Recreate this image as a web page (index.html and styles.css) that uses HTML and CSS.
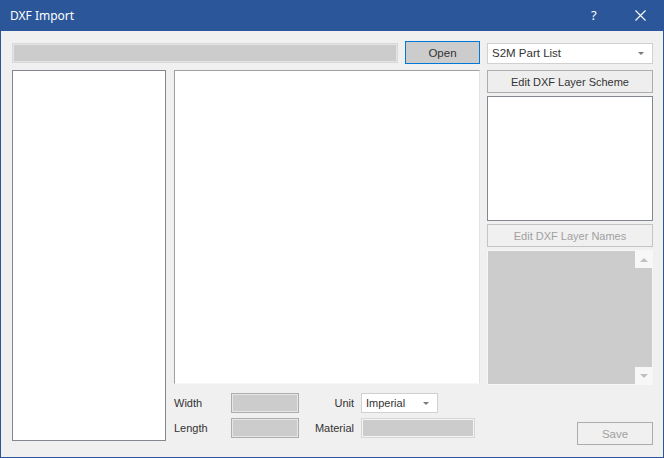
FILE: index.html
```html
<!DOCTYPE html>
<html>
<head>
<meta charset="utf-8">
<link rel="stylesheet" href="styles.css">
</head>
<body>
<div class="window">
  <div class="titlebar">
    <span class="title">DXF Import</span>
    <span class="help">?</span>
    <span class="close"><svg width="11" height="11" viewBox="0 0 11 11"><path d="M0.5 0.5 L10.5 10.5 M10.5 0.5 L0.5 10.5" stroke="#fff" stroke-width="1.1" fill="none"/></svg></span>
  </div>
  <div class="content">
    <div class="toprow">
      <div class="path-field"></div>
      <div class="btn btn-open">Open</div>
    </div>
    <div class="combo combo-part"><span>S2M Part List</span><span class="arrow"></span></div>

    <div class="list list-left"></div>

    <div class="center">
      <div class="list list-main"></div>
      <div class="form">
        <span class="lbl">Width</span>
        <div class="field field-num"></div>
        <span class="lbl lbl-r">Unit</span>
        <div class="combo combo-unit"><span>Imperial</span><span class="arrow"></span></div>
        <span class="lbl">Length</span>
        <div class="field field-num"></div>
        <span class="lbl lbl-r">Material</span>
        <div class="field field-mat"></div>
      </div>
    </div>

    <div class="right">
      <div class="btn btn-wide">Edit DXF Layer Scheme</div>
      <div class="list list-scheme"></div>
      <div class="btn btn-wide btn-disabled">Edit DXF Layer Names</div>
      <div class="graylist">
        <div class="gl-body"></div>
        <div class="scrollbar">
          <div class="sb-btn"><span class="tri-up"></span></div>
          <div class="sb-track"></div>
          <div class="sb-btn"><span class="tri-down"></span></div>
        </div>
      </div>
      <div class="btn btn-save btn-disabled">Save</div>
    </div>
  </div>
</div>
</body>
</html>
```

FILE: styles.css
```css
* { box-sizing: border-box; }
html, body { margin: 0; padding: 0; }
body {
  width: 664px;
  height: 458px;
  font-family: "Liberation Sans", Arial, sans-serif;
  font-size: 11px;
  color: #333;
  background: #f0f0f0;
}
.window {
  width: 664px;
  height: 458px;
  border: 1px solid #2b579a;
  border-top: none;
  background: #f0f0f0;
  display: flex;
  flex-direction: column;
}
.titlebar {
  height: 31px;
  margin: 0 -1px;
  background: #2b579a;
  color: #fff;
  display: flex;
  align-items: center;
  padding-left: 10px;
  flex-shrink: 0;
}
.title {
  font-family: "Noto Sans", "Segoe UI", sans-serif;
  font-size: 12px;
  flex: 1;
  padding-bottom: 1px;
}
.help {
  font-family: "Noto Sans", sans-serif;
  font-size: 13px;
  width: 10px;
  margin-right: 34px;
  padding-bottom: 2px;
}
.close {
  width: 11px;
  height: 11px;
  margin-right: 18px;
  display: flex;
  margin-bottom: 1px;
}
.content {
  padding: 10px 11px 0 11px;
  display: grid;
  grid-template-columns: 154px 306px 165px;
  grid-template-rows: 23px auto;
  column-gap: 8px;
  row-gap: 6px;
}
.toprow {
  grid-column: 1 / 3;
  display: flex;
  align-items: center;
  gap: 7px;
}
.path-field {
  width: 386px;
  height: 20px;
  margin-top: 1px;
  background: #cccccc;
  border: 1px solid #d9d9d9;
  box-shadow: inset 0 0 0 1px #e4e4e4;
}
.btn {
  display: flex;
  align-items: center;
  justify-content: center;
  border: 1px solid #adadad;
  background: #eeeeee;
  color: #333;
  height: 23px;
  font-size: 11px;
}
.btn-open {
  width: 75px;
  margin-left: auto;
  background: #cccccc;
  border-color: #0078d7;
  color: #333;
  font-size: 11.5px;
}
.combo {
  background: #fff;
  border: 1px solid #d0d0d0;
  height: 21px;
  display: flex;
  align-items: center;
  padding-left: 4px;
  padding-right: 9px;
  color: #333;
}
.combo span:first-child { flex: 1; }
.arrow {
  width: 0;
  height: 0;
  border-left: 3px solid transparent;
  border-right: 3px solid transparent;
  border-top: 3px solid #7a7a7a;
}
.combo-part {
  margin-left: -1px;
  width: 166px;
  height: 21px;
  align-self: center;
  margin-top: 1px;
  font-size: 11.5px;
  padding-right: 8px;
}
.list {
  background: #fff;
  border: 1px solid #828790;
}
.list-left {
  height: 371px;
}
.center {
  display: flex;
  flex-direction: column;
}
.list-main {
  height: 314px;
  border-top: 1px solid #a0a0a0;
  border-left: 1px solid #a0a0a0;
  border-right: 1px solid #e3e3e3;
  border-bottom: 1px solid #f8f8f8;
}
.form {
  margin-top: 9px;
  display: grid;
  grid-template-columns: 57px 68px 62px auto;
  grid-template-rows: 20px 20px;
  row-gap: 5px;
  align-items: center;
}
.lbl {
  color: #333;
  font-size: 11px;
}
.lbl-r {
  text-align: right;
  padding-right: 7px;
}
.field {
  height: 20px;
  background: #cccccc;
  border: 1px solid #adadad;
  box-shadow: inset 0 0 0 1px #e6e6e6;
}
.field-num { width: 68px; }
.field-mat {
  width: 114px;
  border-color: #d6d6d6;
  box-shadow: inset 0 0 0 1px #f4f4f4;
}
.combo-unit {
  width: 77px;
  height: 20px;
  padding-right: 8px;
}
.right {
  margin-left: -1px;
  display: flex;
  flex-direction: column;
}
.btn-wide {
  width: 166px;
}
.list-scheme {
  width: 166px;
  height: 125px;
  margin-top: 3px;
}
.btn-disabled {
  color: #a0a0a0;
  border-color: #c4c4c4;
  background: #f0f0f0;
}
.right .btn-disabled.btn-wide { margin-top: 3px; }
.graylist {
  width: 166px;
  height: 135px;
  margin-top: 3px;
  border: 1px solid #f7f7f7;
  display: flex;
  background: #cccccc;
}
.gl-body { flex: 1; }
.scrollbar {
  width: 17px;
  display: flex;
  flex-direction: column;
}
.sb-btn {
  height: 17px;
  background: #f7f7f7;
  display: flex;
  align-items: center;
  justify-content: center;
}
.sb-track { flex: 1; background: #cccccc; }
.tri-up, .tri-down {
  width: 0;
  height: 0;
  border-left: 4px solid transparent;
  border-right: 4px solid transparent;
}
.tri-up { border-bottom: 4px solid #c0c0c0; }
.tri-down { border-top: 4px solid #c0c0c0; }
.btn-save {
  width: 76px;
  height: 23px;
  align-self: flex-end;
  margin-top: 37px;
  font-size: 11.5px;
  border-color: #adadad;
}
```
